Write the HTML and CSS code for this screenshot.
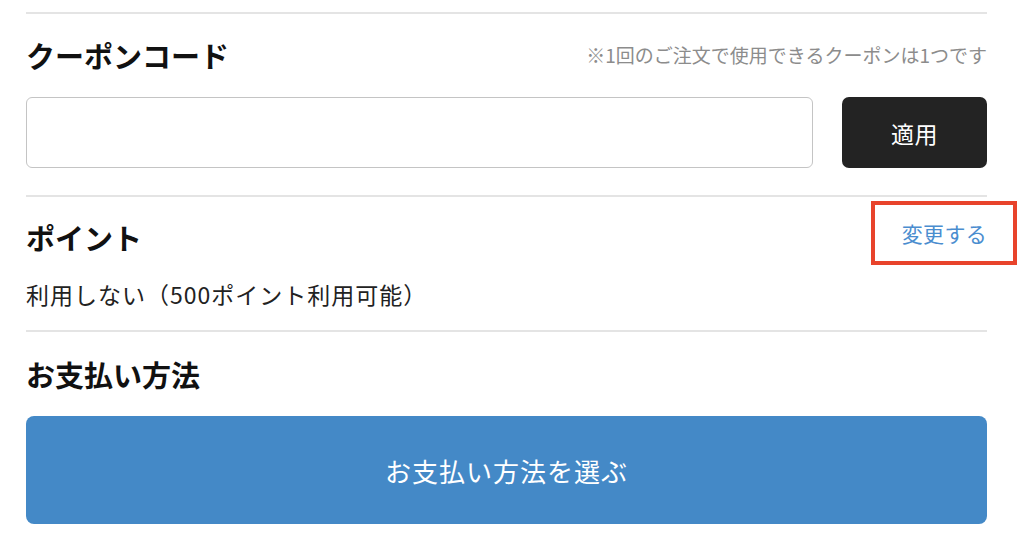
FILE: index.html
```html
<!DOCTYPE html>
<html lang="ja">
<head>
<meta charset="utf-8">
<link rel="stylesheet" href="styles.css">
</head>
<body>
<main class="page">
  <section class="block coupon">
    <div class="row-head">
      <h2 class="title">クーポンコード</h2>
      <p class="note">※1回のご注文で使用できるクーポンは1つです</p>
    </div>
    <div class="coupon-form">
      <input class="coupon-input" type="text" aria-label="クーポンコード">
      <button class="apply-btn" type="button">適用</button>
    </div>
  </section>
  <section class="block points">
    <div class="row-head">
      <h2 class="title">ポイント</h2>
      <a class="change-link" href="#">変更する<span class="highlight"></span></a>
    </div>
    <p class="points-text">利用しない（500ポイント利用可能）</p>
  </section>
  <section class="block payment">
    <h2 class="title payment-title">お支払い方法</h2>
    <button class="pay-btn" type="button">お支払い方法を選ぶ</button>
  </section>
</main>
</body>
</html>
```

FILE: styles.css
```css
* { box-sizing: border-box; }
html, body { margin: 0; padding: 0; background: #fff; }
body {
  font-family: "Noto Sans CJK JP", "Noto Sans", sans-serif;
  color: #1a1a1a;
}
.page {
  width: 961px;
  margin: 12px 0 0 26px;
}
.block {
  border-top: 2px solid #e4e4e4;
}
.coupon { padding: 21px 0 27px; }
.points { padding: 20px 0 20px; }
.payment { padding: 22px 0 0; }

.row-head {
  display: flex;
  justify-content: space-between;
  align-items: center;
  height: 40px;
}
.title {
  margin: 0;
  font-size: 29px;
  line-height: 40px;
  font-weight: 700;
  color: #111;
}
.note {
  margin: 0;
  font-size: 19px;
  color: #8c8c8c;
  line-height: 30px;
}
.coupon-form {
  display: flex;
  gap: 29px;
  margin-top: 22px;
  height: 71px;
}
.coupon-input {
  flex: 1;
  height: 71px;
  border: 1.5px solid #c4c4c4;
  border-radius: 6px;
  background: #fff;
  outline: none;
  font-size: 20px;
  padding: 0 16px;
}
.apply-btn {
  width: 145px;
  height: 71px;
  border: none;
  border-radius: 7px;
  background: #232323;
  color: #fff;
  font-family: inherit;
  font-size: 23px;
  letter-spacing: 0.5px;
}
.change-link {
  position: relative;
  font-size: 21px;
  line-height: 30px;
  color: #4a8dcf;
  text-decoration: none;
  margin-bottom: 8px;
  letter-spacing: 0.3px;
}
.highlight {
  position: absolute;
  top: -17px;
  bottom: -17px;
  left: -31px;
  right: -30px;
  border: 4px solid #e8432b;
}
.points-text {
  margin: 21px 0 0;
  font-size: 23px;
  line-height: 32px;
  color: #222;
  letter-spacing: 1px;
}
.payment-title { margin-bottom: 22px; }
.pay-btn {
  display: block;
  width: 100%;
  height: 108px;
  border: none;
  border-radius: 8px;
  background: #4489c7;
  color: #fff;
  font-family: inherit;
  font-size: 26px;
  letter-spacing: 1px;
}
```
